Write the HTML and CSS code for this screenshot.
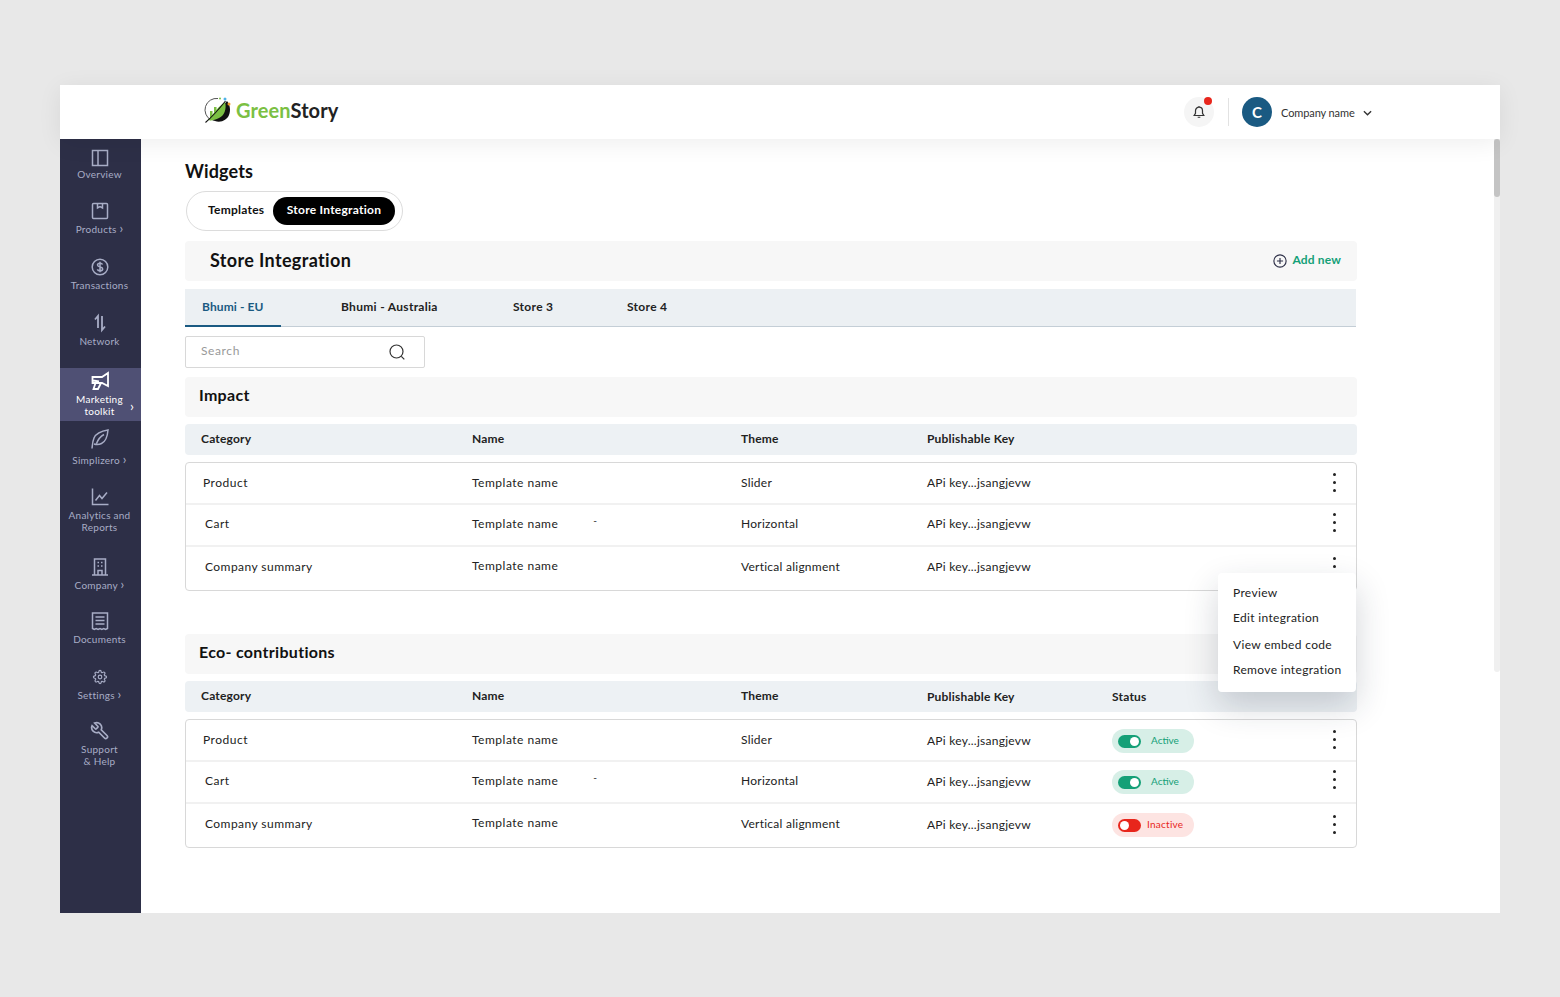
FILE: index.html
```html
<!DOCTYPE html>
<html lang="en">
<head>
<meta charset="utf-8">
<title>Widgets</title>
<link rel="stylesheet" href="styles.css">
</head>
<body>
<div class="app">
  <header class="topbar">
    <div class="logo">
      <svg class="logo-mark" viewBox="0 0 28 28" width="28" height="28">
        <path d="M7 24A11.500 11.500 0 0 1 14 2.500" fill="none" stroke="#555" stroke-width="1"/>
        <path d="M23 5c3 4 4 9 2 14-2 5-8 8-14 6-1 0-3-1-4-2z" fill="#111"/>
        <path d="M6 15h2.500v7H6zM10 11h2.500v8H10z" fill="#7bc043"/>
        <path d="M4 24C8 21 11 13 21 6c2 7-1 14-6 16-4 2-8 3-11 2z" fill="#7bc043"/>
        <path d="M1.500 26.500C9 20 15 13 21.500 5" fill="none" stroke="#111" stroke-width="1.100"/>
        <circle cx="16" cy="2.500" r="1" fill="#7bc043"/>
        <circle cx="21" cy="3" r="1.500" fill="#4fb3e8"/>
        <circle cx="25" cy="8" r="1.500" fill="#f39a2b"/>
      </svg>
      <span class="logo-text"><span class="logo-green">Green</span>Story</span>
    </div>
    <div class="account">
      <div class="bell">
        <svg viewBox="0 0 16 16" width="14" height="14" fill="none" stroke="#333" stroke-width="1.400"><path d="M8 2.500a4 4 0 0 0-4 4v3L2.500 12h11L12 9.500v-3a4 4 0 0 0-4-4zM6.500 14h3M8 1v1.500"/></svg>
        <span class="bell-dot"></span>
      </div>
      <span class="divider"></span>
      <span class="avatar">C</span>
      <span class="company">Company name</span>
      <svg class="chev" viewBox="0 0 10 6" width="9" height="6" fill="none" stroke="#333" stroke-width="1.500"><path d="M1 1l4 4 4-4"/></svg>
    </div>
  </header>
  <div class="body">
    <nav class="sidebar">
      <a class="nav nav-overview">
        <svg viewBox="0 0 20 20" width="20" height="20"><path d="M2.500 2.500h15v15h-15zM8 2.500v15"/></svg>
        <span class="nav-label">Overview</span>
      </a>
      <a class="nav">
        <svg viewBox="0 0 20 20" width="20" height="20"><path d="M2.500 3.500a1 1 0 0 1 1-1h13a1 1 0 0 1 1 1v13a1 1 0 0 1-1 1h-13a1 1 0 0 1-1-1zM7.500 2.500v4.500l2.500-1.500L12.500 7V2.500"/></svg>
        <span class="nav-label">Products <span class="gt">›</span></span>
      </a>
      <a class="nav">
        <svg viewBox="0 0 20 20" width="20" height="20"><circle cx="10" cy="10" r="7.800"/><path d="M12.600 7.500c-.5-1-1.500-1.300-2.600-1.300-1.500 0-2.500.8-2.500 1.900 0 2.600 5.200 1.300 5.200 3.900 0 1.100-1.100 1.800-2.700 1.800-1.100 0-2.200-.5-2.700-1.500M10 4.800v10.400"/></svg>
        <span class="nav-label">Transactions</span>
      </a>
      <a class="nav">
        <svg viewBox="0 0 20 20" width="20" height="20"><path class="bold" d="M5 6.500l3-3.500v12M12 3v14l3-3.500"/></svg>
        <span class="nav-label">Network</span>
      </a>
      <a class="nav nav-active">
        <svg viewBox="0 0 20 20" width="20" height="20"><path class="bold" d="M2.500 6h9.500L18 2v13l-6-3H2.500zM5.500 12l-2 6h4.500l3-6M3 9.500l6 1"/></svg>
        <span class="nav-label">Marketing<br>toolkit</span>
        <span class="nav-arrow">›</span>
      </a>
      <a class="nav nav-simplizero">
        <svg class="leaf" viewBox="0 0 20 20" width="20" height="20"><path d="M2 19.500c.5-4 .5-7 2-10.500 2-4.500 7-7 14-8-.5 6-2 11.500-6.500 13.500-2 1-5 1.200-7.500.5M6.500 14.500c1.500-4 4-7 7.500-9"/></svg>
        <span class="nav-label">Simplizero <span class="gt">›</span></span>
      </a>
      <a class="nav nav-analytics">
        <svg viewBox="0 0 20 20" width="20" height="20"><path d="M2.500 1.500v16H18.500M5.500 13.500l4-5 2.500 3 5-6"/></svg>
        <span class="nav-label">Analytics and<br>Reports</span>
      </a>
      <a class="nav nav-company">
        <svg viewBox="0 0 20 20" width="20" height="20"><path d="M4.500 18V2h11v16M2 18h16M8 18v-4.500h4V18M7.500 5.500h1.500M11 5.500h1.500M7.500 9h1.500M11 9h1.500"/></svg>
        <span class="nav-label">Company <span class="gt">›</span></span>
      </a>
      <a class="nav">
        <svg viewBox="0 0 20 20" width="20" height="20"><path d="M2.500 2h15v15.500l-1.900 1-1.900-1-1.900 1-1.800-1-1.900 1-1.900-1-1.900 1-1.800-1zM5.500 6h9M5.500 9.500h9M5.500 13h9"/></svg>
        <span class="nav-label">Documents</span>
      </a>
      <a class="nav nav-settings">
        <svg class="gear" viewBox="-4.800 -4.800 33.600 33.600" width="20" height="20"><circle cx="12" cy="12" r="3"/><path d="M19.400 15a1.650 1.650 0 0 0 .33 1.820l.06.06a2 2 0 0 1 0 2.830 2 2 0 0 1-2.830 0l-.06-.06a1.650 1.650 0 0 0-1.820-.33 1.650 1.650 0 0 0-1 1.510V21a2 2 0 0 1-2 2 2 2 0 0 1-2-2v-.09A1.650 1.650 0 0 0 9 19.400a1.650 1.650 0 0 0-1.820.33l-.06.06a2 2 0 0 1-2.830 0 2 2 0 0 1 0-2.830l.06-.06a1.650 1.650 0 0 0 .33-1.820 1.650 1.650 0 0 0-1.510-1H3a2 2 0 0 1-2-2 2 2 0 0 1 2-2h.09A1.650 1.650 0 0 0 4.600 9a1.650 1.650 0 0 0-.33-1.820l-.06-.06a2 2 0 0 1 0-2.830 2 2 0 0 1 2.830 0l.06.06a1.650 1.650 0 0 0 1.820.33H9a1.650 1.650 0 0 0 1-1.510V3a2 2 0 0 1 2-2 2 2 0 0 1 2 2v.09a1.650 1.650 0 0 0 1 1.510 1.650 1.650 0 0 0 1.820-.33l.06-.06a2 2 0 0 1 2.830 0 2 2 0 0 1 0 2.830l-.06.06a1.650 1.650 0 0 0-.33 1.820V9a1.650 1.650 0 0 0 1.510 1H21a2 2 0 0 1 2 2 2 2 0 0 1-2 2h-.09a1.650 1.650 0 0 0-1.510 1z"/></svg>
        <span class="nav-label">Settings <span class="gt">›</span></span>
      </a>
      <a class="nav nav-support">
        <svg class="gear" viewBox="0 0 24 24" width="20" height="20"><path transform="translate(24 0) scale(-1 1)" d="M14.700 6.300a1 1 0 0 0 0 1.400l1.600 1.600a1 1 0 0 0 1.400 0l3.770-3.770a6 6 0 0 1-7.940 7.940l-6.910 6.910a2.120 2.120 0 0 1-3-3l6.910-6.910a6 6 0 0 1 7.940-7.940l-3.760 3.760z"/></svg>
        <span class="nav-label">Support<br>&amp; Help</span>
      </a>
    </nav>
    <main class="main">
      <h1 class="page-title">Widgets</h1>
      <div class="switch">
        <span class="switch-item">Templates</span>
        <span class="switch-item switch-on">Store Integration</span>
      </div>
      <div class="store-head">
        <h2 class="store-title">Store Integration</h2>
        <a class="add-new">
          <svg viewBox="0 0 16 16" width="14" height="14" fill="none" stroke="#2d2f47" stroke-width="1.300"><circle cx="8" cy="8" r="7"/><path d="M8 4.500v7M4.500 8h7"/></svg>
          <span class="add-text">Add new</span>
        </a>
      </div>
      <div class="tabs">
        <span class="tab tab-active">Bhumi - EU</span>
        <span class="tab tab-au">Bhumi - Australia</span>
        <span class="tab tab-s3">Store 3</span>
        <span class="tab">Store 4</span>
      </div>
      <div class="search">
        <span class="search-text">Search</span>
        <svg viewBox="0 0 18 18" width="18" height="18" fill="none" stroke="#333" stroke-width="1.200"><circle cx="8.500" cy="8.500" r="6.500"/><path d="M13.300 13.300l3 3"/></svg>
      </div>

      <section class="section">
        <h3 class="section-title">Impact</h3>
        <div class="thead">
          <span>Category</span><span>Name</span><span>Theme</span><span>Publishable Key</span>
        </div>
        <div class="tbody">
          <div class="row">
            <span>Product</span><span>Template name</span><span>Slider</span><span>APi key...jsangjevw</span><span></span><i class="kebab"></i>
          </div>
          <div class="row row-2">
            <span class="indent">Cart</span><span>Template name<span class="dash">-</span></span><span>Horizontal</span><span>APi key...jsangjevw</span><span></span><i class="kebab"></i>
          </div>
          <div class="row row-3">
            <span class="indent">Company summary</span><span class="lift">Template name</span><span>Vertical alignment</span><span>APi key...jsangjevw</span><span></span><i class="kebab"></i>
          </div>
        </div>
      </section>

      <section class="section section-eco">
        <h3 class="section-title">Eco- contributions</h3>
        <div class="thead">
          <span>Category</span><span>Name</span><span>Theme</span><span class="drop">Publishable Key</span><span class="drop">Status</span>
        </div>
        <div class="tbody">
          <div class="row">
            <span>Product</span><span>Template name</span><span>Slider</span><span class="drop">APi key...jsangjevw</span>
            <span class="status status-on"><b class="toggle"></b>Active</span><i class="kebab"></i>
          </div>
          <div class="row row-2">
            <span class="indent">Cart</span><span>Template name<span class="dash">-</span></span><span>Horizontal</span><span class="drop">APi key...jsangjevw</span>
            <span class="status status-on"><b class="toggle"></b>Active</span><i class="kebab"></i>
          </div>
          <div class="row row-3">
            <span class="indent">Company summary</span><span class="lift">Template name</span><span>Vertical alignment</span><span class="drop">APi key...jsangjevw</span>
            <span class="status status-off"><b class="toggle"></b>Inactive</span><i class="kebab kebab-low"></i>
          </div>
        </div>
      </section>

      <ul class="menu">
        <li>Preview</li>
        <li>Edit integration</li>
        <li>View embed code</li>
        <li>Remove integration</li>
      </ul>
      <div class="scroll-track"><div class="scroll-thumb"></div></div>
    </main>
  </div>
</div>
</body>
</html>
```

FILE: styles.css
```css
* { box-sizing: border-box; }
html, body { margin: 0; height: 100%; }
body {
  background: #e8e8e8;
  padding: 85px 60px 84px;
  font-family: "Lato", "Noto Sans", sans-serif;
  color: #222;
  overflow: hidden;
}
h1, h2, h3, ul { margin: 0; padding: 0; }
.app { width: 1440px; height: 828px; background: #fff; display: flex; flex-direction: column; }

.topbar {
  height: 54px;
  flex: none;
  display: flex;
  align-items: center;
  justify-content: space-between;
  padding: 0 128px 0 144px;
  background: #fff;
  box-shadow: 0 4px 24px rgba(0, 0, 0, .07);
  position: relative;
  z-index: 2;
}
.logo { display: flex; align-items: center; gap: 4px; margin-top: -4px; }
.logo-text { font-size: 20px; font-weight: 700; color: #222; letter-spacing: .1px; }
.logo-green { color: #7bc043; }
.account { display: flex; align-items: center; }
.bell {
  width: 30px; height: 30px; border-radius: 50%;
  background: #f5f5f5;
  display: flex; align-items: center; justify-content: center;
  position: relative;
}
.bell-dot {
  position: absolute; top: 0; right: 2px;
  width: 8px; height: 8px; border-radius: 50%;
  background: #e8261c;
}
.divider { width: 1px; height: 28px; background: #e2e2e2; margin: 0 13px 0 14px; }
.avatar {
  width: 30px; height: 30px; border-radius: 50%;
  background: #1a5a82; color: #fff;
  font-size: 15px; font-weight: 700;
  display: flex; align-items: center; justify-content: center;
}
.company { font-size: 11px; width: 73px; margin: 0 9px; letter-spacing: -.1px; color: #333; white-space: nowrap; }
.chev { margin-top: 1px; }

.body { flex: 1; display: flex; min-height: 0; }
.sidebar { width: 81px; flex: none; background: #2d2f47; }
.nav {
  display: flex; flex-direction: column; align-items: center;
  height: 56px; padding: 9px 2px 0 0;
  color: #a8adc6; position: relative;
}
.nav svg { flex: none; fill: none; stroke: #a8adc6; stroke-width: 1.500; }
.nav svg .bold { stroke-width: 1.800; }
.nav svg.gear { stroke-width: 2; }
.nav-label {
  margin-top: 2px;
  font-size: 10px; line-height: 12px; text-align: center;
  letter-spacing: .25px; white-space: nowrap;
}
.gt { font-size: 13px; line-height: 10px; }
.nav-overview { height: 53px; }
.nav-overview .nav-label { margin-top: 0; }
.nav-active {
  height: 53px; margin-top: 8px; padding-top: 3px;
  background: #4f5074; color: #fff;
}
.nav-active svg { stroke: #fff; }
.nav-arrow { position: absolute; right: 7px; top: 32px; font-size: 14px; line-height: 12px; }
.nav-simplizero { height: 57px; padding-top: 8px; }
.nav-simplizero .nav-label { margin-top: 5px; }
.nav-analytics { height: 70px; }
.nav-company { height: 54px; }
.nav-settings { height: 53px; }
.nav-support { padding-top: 10px; }
.nav-support .nav-label { margin-top: 2px; }

.main { flex: 1; position: relative; padding: 21px 0 0 44px; min-width: 0; }
.page-title { font-size: 18px; line-height: 22px; font-weight: 700; color: #111; letter-spacing: .15px; }
.switch {
  margin: 9px 0 10px 1px;
  width: 217px; height: 40px;
  border: 1px solid #dcdcdc; border-radius: 20px;
  display: flex; align-items: center; justify-content: space-between;
  padding: 0 7px 0 21px;
}
.switch-item { font-size: 12px; font-weight: 700; letter-spacing: .25px; color: #111; margin-bottom: 3px; }
.switch-on {
  width: 122px; height: 28px; border-radius: 14px;
  margin-bottom: 0; padding-bottom: 3px;
  background: #000; color: #fff;
  display: flex; align-items: center; justify-content: center;
}
.store-head {
  width: 1172px; height: 40px;
  background: #f7f7f7; border-radius: 4px;
  display: flex; align-items: center; justify-content: space-between;
  padding: 0 16px 0 25px;
}
.store-title { font-size: 18px; font-weight: 700; color: #111; letter-spacing: .35px; margin-bottom: 2px; }
.add-new {
  display: flex; align-items: center; gap: 5px;
  color: #14a077; font-size: 12px; font-weight: 700; letter-spacing: .15px;
}
.add-text { margin-bottom: 3px; }
.tabs {
  width: 1171px; height: 38px; margin-top: 8px;
  background: #ecf0f3; border-bottom: 1px solid #c4ced6;
  display: flex;
}
.tab {
  height: 38px; padding: 0 17px 4px; margin-right: 43px;
  display: flex; align-items: center;
  font-size: 12px; font-weight: 700; letter-spacing: .3px; color: #222;
  white-space: nowrap;
}
.tab-active { width: 96px; color: #1a5a82; letter-spacing: .1px; border-bottom: 2px solid #1a5a82; padding-bottom: 2px; }
.tab-au { width: 129px; }
.tab-s3 { width: 71px; }
.search {
  width: 240px; height: 32px; margin-top: 9px;
  border: 1px solid #d8d8d8; border-radius: 2px;
  display: flex; align-items: center; justify-content: space-between;
  padding: 0 18px 0 15px;
}
.search-text { font-size: 12px; color: #999; letter-spacing: .6px; margin-bottom: 3px; }
.section { width: 1172px; margin-top: 9px; }
.section-eco { margin-top: 43px; }
.section-title {
  height: 40px; padding: 0 0 5px 14px;
  background: #f7f7f7; border-radius: 4px;
  display: flex; align-items: center;
  font-size: 16px; font-weight: 700; color: #111; letter-spacing: .3px;
}
.thead, .row {
  display: grid;
  align-items: center;
  font-size: 12px;
}
.thead {
  grid-template-columns: 271px 269px 186px 185px 1fr;
  height: 31px; margin-top: 7px; padding: 0 0 2px 16px;
  background: #edf1f4; border-radius: 4px;
  font-weight: 700; letter-spacing: .2px; color: #222;
}
.tbody {
  margin-top: 7px; height: 129px;
  border: 1px solid #d8d8d8; border-radius: 4px;
}
.row {
  grid-template-columns: 269px 269px 186px 185px 1fr 44px;
  height: 42px; padding: 0 0 2px 17px;
  border-bottom: 2px solid #f1f1f1;
  letter-spacing: .5px; color: #222;
}
.row > span:nth-child(3), .row > span:nth-child(4) { letter-spacing: .25px; }
.row-2 { padding-bottom: 4px; }
.row-3 { height: 41px; border-bottom: 0; padding-bottom: 3px; }
.indent { padding-left: 2px; letter-spacing: .45px; }
.lift { padding-bottom: 2px; }
.drop { padding-top: 2px; }
.dash { margin-left: 35px; vertical-align: 4px; font-size: 10px; line-height: 0; }
.kebab, .kebab::before, .kebab::after {
  display: block; width: 3px; height: 3px; border-radius: 50%; background: #222;
}
.kebab { position: relative; justify-self: center; }
.row-2 .kebab { margin-bottom: 2px; }
.row-3 .kebab-low { margin: 2px 0 0; }
.kebab::before, .kebab::after { content: ""; position: absolute; left: 0; }
.kebab::before { top: -8px; }
.kebab::after { top: 8px; }
.row .status {
  width: 82px; height: 24px; border-radius: 12px; margin-top: 4px;
  display: flex; align-items: center; gap: 10px;
  padding: 0 0 2px 6px;
  font-size: 10px; letter-spacing: 0;
}
.status-on { background: #d7efe7; color: #14a077; }
.row .status-off { background: #fde4e2; color: #e8261c; gap: 6px; letter-spacing: .25px; }
.toggle {
  width: 23px; height: 13px; border-radius: 7px; margin-top: 2px;
  position: relative; flex: none;
}
.toggle::after {
  content: ""; position: absolute; top: 2px;
  width: 9px; height: 9px; border-radius: 50%; background: #fff;
}
.status-on .toggle { background: #14a077; }
.status-on .toggle::after { right: 2px; }
.status-off .toggle { background: #e8261c; }
.status-off .toggle::after { left: 2px; }

.menu {
  position: absolute; left: 1077px; top: 434px;
  width: 138px; height: 119px;
  background: #fff; border-radius: 4px;
  box-shadow: 0 14px 34px rgba(30, 40, 60, .2);
  list-style: none;
  padding-top: 12px;
  font-size: 12px; letter-spacing: .33px; color: #222;
}
.menu li { height: 25px; line-height: 16px; padding-left: 15px; }
.menu li:nth-child(2) { height: 27px; }
.scroll-track {
  position: absolute; right: 0; top: 0;
  width: 6px; height: 533px;
  background: #f0f0f0; border-radius: 0 0 3px 3px;
}
.scroll-thumb { width: 6px; height: 58px; background: #c4c4c4; border-radius: 3px; }
```
